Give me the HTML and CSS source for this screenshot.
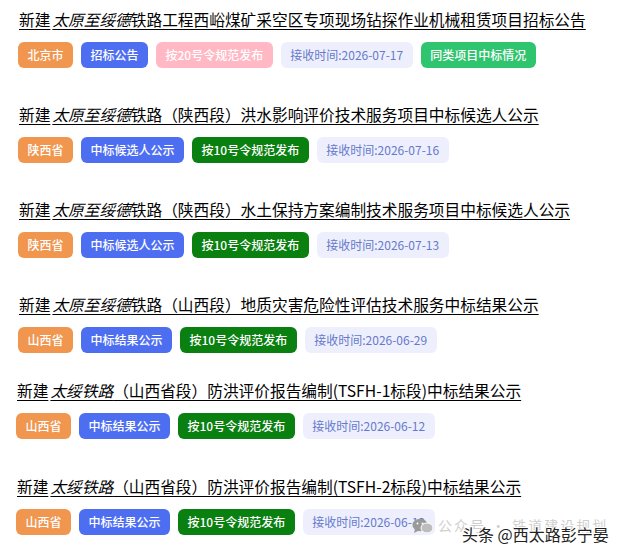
FILE: index.html
```html
<!DOCTYPE html>
<html>
  <head>
    <meta charset="utf-8" />
    <title>招标公告列表</title>
    <meta name="viewport" content="width=device-width, initial-scale=1" />
    <link rel="stylesheet" href="styles.css">
  </head>
  <body>
    <div class="page">
      <div class="list">
        <div class="item">
          <a class="title" href="#">新建<i>太原至绥德</i>铁路工程西峪煤矿采空区专项现场钻探作业机械租赁项目招标公告</a>
          <div class="tags">
            <span class="tag orange">北京市</span>
            <span class="tag blue">招标公告</span>
            <span class="tag pink">按20号令规范发布</span>
            <span class="tag date">接收时间:2026-07-17</span>
            <span class="tag lime">同类项目中标情况</span>
          </div>
        </div>

        <div class="item">
          <a class="title" href="#">新建<i>太原至绥德</i>铁路（陕西段）洪水影响评价技术服务项目中标候选人公示</a>
          <div class="tags">
            <span class="tag orange">陕西省</span>
            <span class="tag blue">中标候选人公示</span>
            <span class="tag green">按10号令规范发布</span>
            <span class="tag date">接收时间:2026-07-16</span>
          </div>
        </div>

        <div class="item">
          <a class="title" href="#">新建<i>太原至绥德</i>铁路（陕西段）水土保持方案编制技术服务项目中标候选人公示</a>
          <div class="tags">
            <span class="tag orange">陕西省</span>
            <span class="tag blue">中标候选人公示</span>
            <span class="tag green">按10号令规范发布</span>
            <span class="tag date">接收时间:2026-07-13</span>
          </div>
        </div>

        <div class="item">
          <a class="title" href="#">新建<i>太原至绥德</i>铁路（山西段）地质灾害危险性评估技术服务中标结果公示</a>
          <div class="tags">
            <span class="tag orange">山西省</span>
            <span class="tag blue">中标结果公示</span>
            <span class="tag green">按10号令规范发布</span>
            <span class="tag date">接收时间:2026-06-29</span>
          </div>
        </div>
      </div>

      <div class="list second">
        <div class="item">
          <a class="title" href="#">新建<i>太绥铁路</i>（山西省段）防洪评价报告编制(TSFH-1标段)中标结果公示</a>
          <div class="tags">
            <span class="tag orange">山西省</span>
            <span class="tag blue">中标结果公示</span>
            <span class="tag green">按10号令规范发布</span>
            <span class="tag date">接收时间:2026-06-12</span>
          </div>
        </div>

        <div class="item">
          <a class="title" href="#">新建<i>太绥铁路</i>（山西省段）防洪评价报告编制(TSFH-2标段)中标结果公示</a>
          <div class="tags">
            <span class="tag orange">山西省</span>
            <span class="tag blue">中标结果公示</span>
            <span class="tag green">按10号令规范发布</span>
            <span class="tag date">接收时间:2026-06-12</span>
          </div>
        </div>
      </div>

      <!-- watermark over the last row -->
      <div class="watermark">
        <svg class="wx" width="22" height="16" viewBox="0 0 22 16">
          <ellipse cx="8" cy="7" rx="7.5" ry="6.2" fill="#9a9a9a" />
          <path d="M3 11 L2 15 L7 12.5 Z" fill="#9a9a9a" />
          <ellipse cx="15" cy="10" rx="6" ry="5" fill="#bdbdbd" stroke="#fff" stroke-width="1" />
          <circle cx="5.5" cy="5.5" r="1" fill="#fff" />
          <circle cx="10.5" cy="5.5" r="1" fill="#fff" />
        </svg>
        <span class="wx-text">公众号 · 铁道建设规划</span>
        <span class="toutiao">头条 @西太路彭宁晏</span>
      </div>
    </div>
  </body>
</html>
```

FILE: styles.css
```css
body {
  margin: 0;
  background: #fff;
  font-family: "Noto Sans CJK SC", "Noto Sans", sans-serif;
  color: #000;
}

.page {
  position: relative;
  width: 624px;
  height: 555px;
  overflow: hidden;
}

.list {
  display: flex;
  flex-direction: column;
  gap: 35px;
  padding: 8px 0 0 19px;
}

.list.second {
  padding: 0 0 0 17px;
  margin-top: 26px;
  gap: 36px;
}

.item {
  display: flex;
  flex-direction: column;
  align-items: flex-start;
  gap: 10px;
}

.title {
  font-size: 15.7px;
  line-height: 24px;
  color: #000;
  text-decoration: underline;
  text-underline-offset: 3px;
  white-space: nowrap;
}

.title i {
  margin-left: 2px;
}

.tags {
  display: flex;
  gap: 8px;
  margin-left: -1px;
}

.tag {
  height: 26px;
  line-height: 26px;
  padding: 0 9.5px;
  border-radius: 6px;
  font-size: 12px;
  font-weight: 500;
  color: #fff;
  white-space: nowrap;
}

.orange {
  background: #f0964f;
}

.blue {
  background: #4e6ef2;
}

.pink {
  background: #ffb8c4;
}

.green {
  background: #0a8010;
}

.lime {
  background: #2fc46e;
}

.date {
  background: #edf0fc;
  color: #6878cc;
  font-weight: 400;
}

.watermark {
  position: absolute;
  left: 412px;
  top: 514px;
  width: 210px;
  height: 34px;
}

.wx {
  position: absolute;
  left: 0;
  top: 4px;
}

.wx-text {
  position: absolute;
  left: 26px;
  top: 1px;
  font-size: 14px;
  letter-spacing: 2px;
  color: #cfcfcf;
  white-space: nowrap;
}

.toutiao {
  position: absolute;
  left: 50px;
  top: 8px;
  font-size: 16px;
  color: #222;
  white-space: nowrap;
  text-shadow: 1px 0 #fff, -1px 0 #fff, 0 1px #fff, 0 -1px #fff;
}
```
